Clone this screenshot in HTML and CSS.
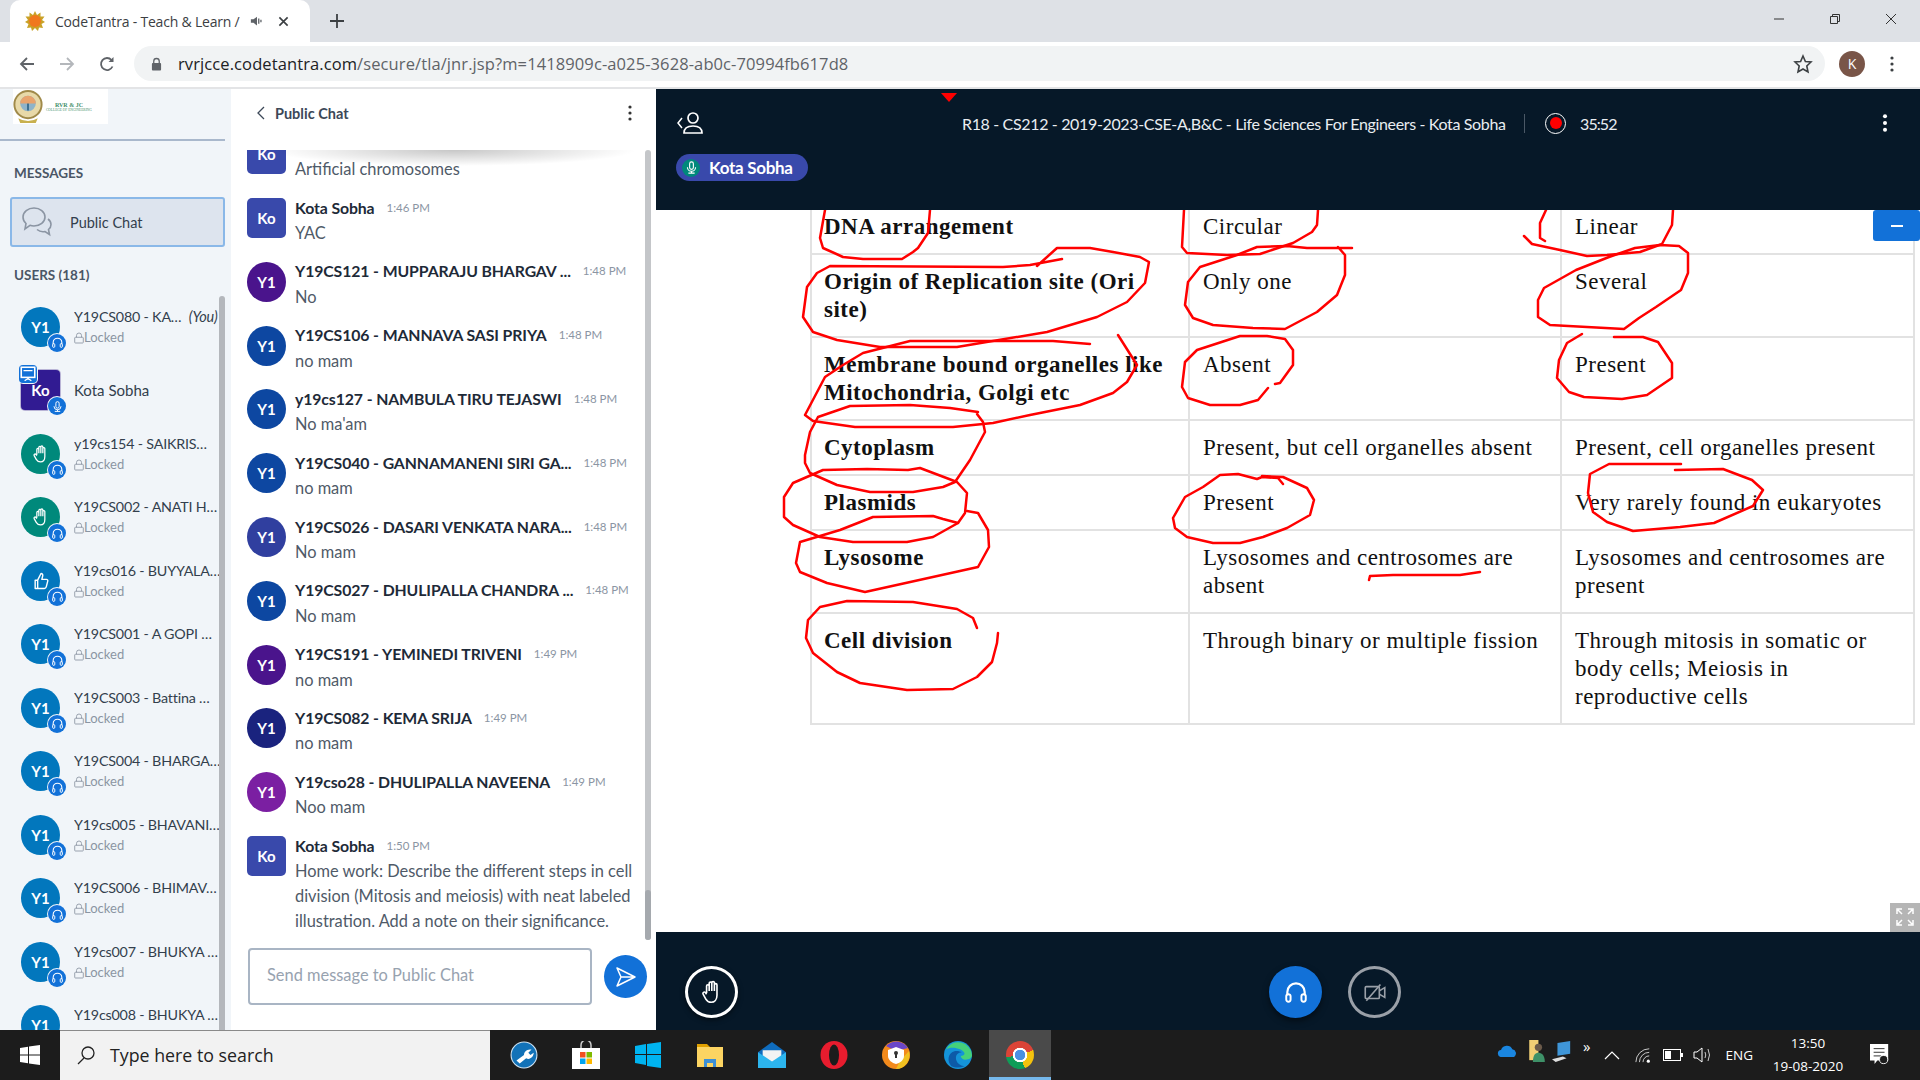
FILE: index.html
```html
<!DOCTYPE html>
<html lang="en">
<head>
  <meta charset="UTF-8">
  <title>CodeTantra - Teach &amp; Learn</title>
  <link rel="stylesheet" href="styles.css">
</head>
<body>
  <svg class="defs" width="0" height="0">
    <symbol id="i-phones" viewBox="0 0 24 24">
      <path d="M4 15v-3a8 8 0 0 1 16 0v3" fill="none" stroke="currentColor" stroke-width="2"/>
      <rect x="3" y="14" width="4" height="7" rx="2" fill="none" stroke="currentColor" stroke-width="1.8"/>
      <rect x="17" y="14" width="4" height="7" rx="2" fill="none" stroke="currentColor" stroke-width="1.8"/>
    </symbol>
    <symbol id="i-mic" viewBox="0 0 24 24">
      <rect x="9" y="3" width="6" height="12" rx="3" fill="none" stroke="currentColor" stroke-width="1.8"/>
      <path d="M5.500 11.500a6.500 6.500 0 0 0 13 0M12 18v3M7 21h10" fill="none" stroke="currentColor" stroke-width="1.800"/>
    </symbol>
    <symbol id="i-lock" viewBox="0 0 14 16">
      <rect x="1" y="7" width="12" height="8" rx="1" fill="none" stroke="currentColor" stroke-width="1.200"/>
      <path d="M3.500 7V4.500a3.500 3.500 0 0 1 7 0V7" fill="none" stroke="currentColor" stroke-width="1.200"/>
    </symbol>
    <symbol id="i-hand" viewBox="0 0 24 24">
      <path d="M7 13V6.500a1.200 1.200 0 0 1 2.400 0V11M9.400 11V4a1.200 1.200 0 0 1 2.400 0v7M11.800 11V3.500a1.200 1.200 0 0 1 2.400 0V11M14.200 11V5.500a1.200 1.200 0 0 1 2.400 0V15c0 4-2.300 6.500-5.300 6.500-2.500 0-3.900-1.100-5-3L3.800 14c-.8-1.400 1-2.700 2.100-1.500L7 14" fill="none" stroke="currentColor" stroke-width="1.500" stroke-linejoin="round"/>
    </symbol>
    <symbol id="i-thumb" viewBox="0 0 24 24">
      <path d="M5 11h3v10H5zM8 11l4-8c1.800 0 2.500 1.500 2 3l-1 4h5.500c1.200 0 1.900 1 1.600 2.100l-1.800 7c-.3 1.100-1 1.900-2.300 1.900H8" fill="none" stroke="currentColor" stroke-width="1.700" stroke-linejoin="round"/>
    </symbol>
  </svg>

  <!-- browser chrome -->
  <div class="tabbar">
    <div class="tab">
      <svg class="favicon" viewBox="0 0 20 20"><polygon points="10,0 12,4 15.500,1.500 15.500,5.500 19.500,5.500 17,9 20,11 16.500,13 18,17 14,16.500 13,20 10,17 7,20 6,16.500 2,17 3.500,13 0,11 3,9 .5,5.500 4.500,5.500 4.500,1.500 8,4" fill="#c9a227"/><circle cx="10" cy="10" r="6" fill="#f0781e"/></svg>
      <span class="tab-title">CodeTantra - Teach &amp; Learn /</span>
      <svg class="tab-sound" viewBox="0 0 16 16"><path d="M1 6h3l4-3v10l-4-3H1z" fill="#5f6368"/><path d="M10 5v6M12.500 6.500v3" stroke="#5f6368" stroke-width="1.500"/></svg>
      <svg class="tab-close" viewBox="0 0 12 12"><path d="M1.500 1.500l9 9M10.500 1.500l-9 9" stroke="#3c4043" stroke-width="1.800"/></svg>
    </div>
    <svg class="tab-new" viewBox="0 0 14 14"><path d="M7 0v14M0 7h14" stroke="#3c4043" stroke-width="1.800"/></svg>
    <div class="win-btns">
      <svg viewBox="0 0 12 12"><path d="M1 6h10" stroke="#333" stroke-width="1"/></svg>
      <svg viewBox="0 0 12 12"><path d="M1.500 3.500h7v7h-7zM3.500 3.500v-2h7v7h-2" fill="none" stroke="#333" stroke-width="1"/></svg>
      <svg viewBox="0 0 12 12"><path d="M1 1l10 10M11 1L1 11" stroke="#333" stroke-width="1"/></svg>
    </div>
  </div>
  <div class="toolbar">
    <svg class="nav-btn" viewBox="0 0 16 16"><path d="M15 8H2M8 2L2 8l6 6" fill="none" stroke="#5f6368" stroke-width="1.800"/></svg>
    <svg class="nav-btn" viewBox="0 0 16 16"><path d="M1 8h13M8 2l6 6-6 6" fill="none" stroke="#b4b7bb" stroke-width="1.800"/></svg>
    <svg class="nav-btn" viewBox="0 0 16 16"><path d="M13.500 10.500A6 6 0 1 1 12.500 4" fill="none" stroke="#5f6368" stroke-width="1.800"/><path d="M14.500 1v5h-5z" fill="#5f6368"/></svg>
    <div class="omnibox">
      <svg class="lock" viewBox="0 0 12 14"><rect x="1" y="6" width="10" height="8" rx="1" fill="#5f6368"/><path d="M3 6V4a3 3 0 0 1 6 0v2" fill="none" stroke="#5f6368" stroke-width="1.400"/></svg>
      <span class="url"><b>rvrjcce.codetantra.com</b>/secure/tla/jnr.jsp?m=1418909c-a025-3628-ab0c-70994fb617d8</span>
      <svg class="star" viewBox="0 0 20 20"><polygon points="10,2 12.400,7.500 18,8 13.800,12 15,18 10,15 5,18 6.200,12 2,8 7.600,7.500" fill="none" stroke="#3c4043" stroke-width="1.600"/></svg>
    </div>
    <span class="profile">K</span>
    <svg class="chrome-menu" viewBox="0 0 4 16"><circle cx="2" cy="2" r="1.600"/><circle cx="2" cy="8" r="1.600"/><circle cx="2" cy="14" r="1.600"/></svg>
  </div>

  <div class="app">
    <!-- left column -->
    <aside class="sidebar">
      <div class="brand">
        <div class="logo">
          <svg class="seal" viewBox="0 0 30 36"><circle cx="15" cy="16" r="14" fill="#e8d9a8" stroke="#a08a4a" stroke-width="2"/><circle cx="15" cy="15" r="8" fill="#8fb3c9"/><path d="M14 8h2v14h-2z" fill="#3b6e8f"/><path d="M7 15a8 8 0 0 1 16 0z" fill="#e9a36c"/><path d="M5 30q10 6 20 0l-2 5H7z" fill="#c8b04e"/></svg>
          <div class="logo-text"><b>RVR &amp; JC</b><span>COLLEGE OF ENGINEERING</span></div>
        </div>
      </div>
      <h4 class="side-title">MESSAGES</h4>
      <div class="chat-link">
        <svg class="chat-icon" viewBox="0 0 32 32"><path d="M13 2c6 0 11 4 11 9s-5 9-11 9c-1.500 0-3-.3-4-.7L4 23l1-5.500C3 15.800 2 13.500 2 11c0-5 5-9 11-9z" fill="none" stroke="#8b95a3" stroke-width="1.600"/><path d="M27 13c2 1.500 3 3.500 3 5.500 0 2-1 3.800-2.500 5l1 5-4.500-3c-3 .6-6-.3-8-2" fill="none" stroke="#8b95a3" stroke-width="1.600"/></svg>
        Public Chat
      </div>
      <h4 class="side-title users-title">USERS (181)</h4>
      <ul class="users">
        <li class="user"><div class="ava ava-blue">Y1<span class="badge"><svg><use href="#i-phones"/></svg></span></div><div class="user-info"><div class="user-name">Y19CS080 - KA… <i>(You)</i></div><div class="locked"><svg><use href="#i-lock"/></svg>Locked</div></div></li>
        <li class="user"><div class="ava ava-host"><span class="host-tag"><svg viewBox="0 0 16 16"><rect x="2" y="2" width="12" height="9" fill="none" stroke="#fff" stroke-width="1.400"/><path d="M4 5h8M8 11v2M5 14l3-2 3 2" stroke="#fff" stroke-width="1.200" fill="none"/></svg></span>Ko<span class="badge"><svg><use href="#i-mic"/></svg></span></div><div class="user-info"><div class="user-name host-name">Kota Sobha</div></div></li>
        <li class="user"><div class="ava ava-green"><svg class="ava-icon"><use href="#i-hand"/></svg><span class="badge"><svg><use href="#i-phones"/></svg></span></div><div class="user-info"><div class="user-name">y19cs154 - SAIKRIS…</div><div class="locked"><svg><use href="#i-lock"/></svg>Locked</div></div></li>
        <li class="user"><div class="ava ava-green"><svg class="ava-icon"><use href="#i-hand"/></svg><span class="badge"><svg><use href="#i-phones"/></svg></span></div><div class="user-info"><div class="user-name">Y19CS002 - ANATI H…</div><div class="locked"><svg><use href="#i-lock"/></svg>Locked</div></div></li>
        <li class="user"><div class="ava ava-blue"><svg class="ava-icon"><use href="#i-thumb"/></svg><span class="badge"><svg><use href="#i-phones"/></svg></span></div><div class="user-info"><div class="user-name">Y19cs016 - BUYYALA…</div><div class="locked"><svg><use href="#i-lock"/></svg>Locked</div></div></li>
        <li class="user"><div class="ava ava-blue">Y1<span class="badge"><svg><use href="#i-phones"/></svg></span></div><div class="user-info"><div class="user-name">Y19CS001 - A GOPI …</div><div class="locked"><svg><use href="#i-lock"/></svg>Locked</div></div></li>
        <li class="user"><div class="ava ava-blue">Y1<span class="badge"><svg><use href="#i-phones"/></svg></span></div><div class="user-info"><div class="user-name">Y19CS003 - Battina …</div><div class="locked"><svg><use href="#i-lock"/></svg>Locked</div></div></li>
        <li class="user"><div class="ava ava-blue">Y1<span class="badge"><svg><use href="#i-phones"/></svg></span></div><div class="user-info"><div class="user-name">Y19CS004 - BHARGA…</div><div class="locked"><svg><use href="#i-lock"/></svg>Locked</div></div></li>
        <li class="user"><div class="ava ava-blue">Y1<span class="badge"><svg><use href="#i-phones"/></svg></span></div><div class="user-info"><div class="user-name">Y19cs005 - BHAVANI…</div><div class="locked"><svg><use href="#i-lock"/></svg>Locked</div></div></li>
        <li class="user"><div class="ava ava-blue">Y1<span class="badge"><svg><use href="#i-phones"/></svg></span></div><div class="user-info"><div class="user-name">Y19CS006 - BHIMAV…</div><div class="locked"><svg><use href="#i-lock"/></svg>Locked</div></div></li>
        <li class="user"><div class="ava ava-blue">Y1<span class="badge"><svg><use href="#i-phones"/></svg></span></div><div class="user-info"><div class="user-name">Y19cs007 - BHUKYA …</div><div class="locked"><svg><use href="#i-lock"/></svg>Locked</div></div></li>
        <li class="user"><div class="ava ava-blue">Y1<span class="badge"><svg><use href="#i-phones"/></svg></span></div><div class="user-info"><div class="user-name">Y19cs008 - BHUKYA …</div><div class="locked"></div></div></li>
      </ul>
      <div class="side-scroll"></div>
    </aside>

    <!-- public chat -->
    <section class="chat">
      <header class="chat-head">
        <svg class="chat-back" viewBox="0 0 8 14"><path d="M7 1L1 7l6 6" fill="none" stroke="#3c4858" stroke-width="1.300"/></svg>
        <span class="chat-title">Public Chat</span>
        <svg class="chat-more" viewBox="0 0 4 16"><circle cx="2" cy="2" r="1.600"/><circle cx="2" cy="8" r="1.600"/><circle cx="2" cy="14" r="1.600"/></svg>
      </header>
      <div class="messages-wrap">
        <div class="messages">
          <div class="msg"><div class="msg-ava sq c-indigo">Ko</div><div class="msg-body"><div class="msg-head"></div><p>Artificial chromosomes</p></div></div>
          <div class="msg"><div class="msg-ava sq c-indigo">Ko</div><div class="msg-body"><div class="msg-head"><span class="msg-name">Kota Sobha</span><span class="msg-time">1:46 PM</span></div><p>YAC</p></div></div>
          <div class="msg"><div class="msg-ava c-purple">Y1</div><div class="msg-body"><div class="msg-head"><span class="msg-name">Y19CS121 - MUPPARAJU BHARGAV ...</span><span class="msg-time">1:48 PM</span></div><p>No</p></div></div>
          <div class="msg"><div class="msg-ava c-blue">Y1</div><div class="msg-body"><div class="msg-head"><span class="msg-name">Y19CS106 - MANNAVA SASI PRIYA</span><span class="msg-time">1:48 PM</span></div><p>no mam</p></div></div>
          <div class="msg"><div class="msg-ava c-blue">Y1</div><div class="msg-body"><div class="msg-head"><span class="msg-name">y19cs127 - NAMBULA TIRU TEJASWI</span><span class="msg-time">1:48 PM</span></div><p>No ma'am</p></div></div>
          <div class="msg"><div class="msg-ava c-blue">Y1</div><div class="msg-body"><div class="msg-head"><span class="msg-name">Y19CS040 - GANNAMANENI SIRI GA...</span><span class="msg-time">1:48 PM</span></div><p>no mam</p></div></div>
          <div class="msg"><div class="msg-ava c-slate">Y1</div><div class="msg-body"><div class="msg-head"><span class="msg-name">Y19CS026 - DASARI VENKATA NARA...</span><span class="msg-time">1:48 PM</span></div><p>No mam</p></div></div>
          <div class="msg"><div class="msg-ava c-blue">Y1</div><div class="msg-body"><div class="msg-head"><span class="msg-name">Y19CS027 - DHULIPALLA CHANDRA ...</span><span class="msg-time">1:48 PM</span></div><p>No mam</p></div></div>
          <div class="msg"><div class="msg-ava c-purple">Y1</div><div class="msg-body"><div class="msg-head"><span class="msg-name">Y19CS191 - YEMINEDI TRIVENI</span><span class="msg-time">1:49 PM</span></div><p>no mam</p></div></div>
          <div class="msg"><div class="msg-ava c-navy">Y1</div><div class="msg-body"><div class="msg-head"><span class="msg-name">Y19CS082 - KEMA SRIJA</span><span class="msg-time">1:49 PM</span></div><p>no mam</p></div></div>
          <div class="msg"><div class="msg-ava c-violet">Y1</div><div class="msg-body"><div class="msg-head"><span class="msg-name">Y19cso28 - DHULIPALLA NAVEENA</span><span class="msg-time">1:49 PM</span></div><p>Noo mam</p></div></div>
          <div class="msg"><div class="msg-ava sq c-indigo">Ko</div><div class="msg-body"><div class="msg-head"><span class="msg-name">Kota Sobha</span><span class="msg-time">1:50 PM</span></div><p>Home work: Describe the different steps in cell division (Mitosis and meiosis) with neat labeled illustration. Add a note on their significance.</p></div></div>
        </div>
        <div class="msg-shadow"></div>
        <div class="msg-scroll"><span></span></div>
      </div>
      <div class="composer">
        <div class="composer-input">Send message to Public Chat</div>
        <button class="send"><svg viewBox="0 0 24 24"><path d="M3 3l18 9-18 9 4-9zM7 12h14" fill="none" stroke="#fff" stroke-width="1.500" stroke-linejoin="round"/></svg></button>
      </div>
    </section>

    <!-- classroom -->
    <main class="stage">
      <header class="stage-head">
        <svg class="marker" viewBox="0 0 16 9"><polygon points="0,0 16,0 8,9" fill="#f00"/></svg>
        <div class="stage-row">
          <svg class="people" viewBox="0 0 28 24"><path d="M6 7l-4 5 4 5" fill="none" stroke="#fff" stroke-width="1.500"/><circle cx="17" cy="7" r="5" fill="none" stroke="#fff" stroke-width="1.700"/><path d="M8 22c0-5 4-7 9-7s9 2 9 7z" fill="none" stroke="#fff" stroke-width="1.700"/></svg>
          <span class="stage-title">R18 - CS212 - 2019-2023-CSE-A,B&amp;C - Life Sciences For Engineers - Kota Sobha</span>
          <span class="stage-sep"></span>
          <span class="rec"><i></i></span>
          <span class="rec-time">35:52</span>
          <svg class="stage-more" viewBox="0 0 4 16"><circle cx="2" cy="2" r="1.800"/><circle cx="2" cy="8" r="1.800"/><circle cx="2" cy="14" r="1.800"/></svg>
        </div>
        <div class="speaker"><span class="speaker-mic"><svg><use href="#i-mic"/></svg></span>Kota Sobha</div>
      </header>

      <div class="board">
        <table class="sheet">
          <colgroup><col class="col-a"><col class="col-b"><col class="col-c"></colgroup>
          <tr><th>DNA arrangement</th><td>Circular</td><td>Linear</td></tr>
          <tr class="tall"><th>Origin of Replication site (Ori site)</th><td>Only one</td><td>Several</td></tr>
          <tr class="tall"><th>Membrane bound organelles like Mitochondria, Golgi etc</th><td>Absent</td><td>Present</td></tr>
          <tr><th>Cytoplasm</th><td>Present, but cell organelles absent</td><td>Present, cell organelles present</td></tr>
          <tr><th>Plasmids</th><td>Present</td><td>Very rarely found in eukaryotes</td></tr>
          <tr class="tall"><th>Lysosome</th><td>Lysosomes and centrosomes are absent</td><td>Lysosomes and centrosomes are present</td></tr>
          <tr><th>Cell division</th><td>Through binary or multiple fission</td><td>Through mitosis in somatic or body cells; Meiosis in reproductive cells</td></tr>
        </table>

        <!-- pen strokes, in page coordinates -->
        <svg class="ink" viewBox="656 210 1264 722" width="1264" height="722">
          <polyline points="825,210 820,238 823,248 843,257 863,259 902,259 913,252 918,248 928,233 930,210"/>
          <polyline points="1062,259 1030,265 1003,267 830,266 817,273 807,287 803,317 813,332 837,340 880,347 957,347 1047,332 1097,317 1127,302 1145,283 1149,262 1140,257 1113,252 1090,248 1057,248 1037,266"/>
          <polyline points="1090,344 1053,341 910,341 863,353 843,365 825,377 805,415 813,421 855,427 953,427 993,423 1030,415 1080,405 1113,393 1127,382 1137,365 1118,335"/>
          <polyline points="978,412 950,408 910,405 850,406 818,417 810,432 805,455 805,463 810,473 837,485 870,492 913,492 943,487 955,482 970,460 985,432 983,422 977,414"/>
          <polyline points="908,470 867,469 823,470 793,483 784,497 784,517 793,525 820,537 853,542 907,542 933,537 958,523 965,513 967,493 957,482 920,468 908,470"/>
          <polyline points="958,523 943,519 933,516 873,517 840,530 800,542 796,563 800,572 827,583 865,592 978,567 989,547 988,530 978,513 967,511"/>
          <polyline points="977,628 973,618 957,609 913,602 847,601 820,607 808,620 806,638 813,653 837,672 860,683 907,690 953,689 977,677 992,662 997,643 998,633"/>
          <polyline points="1184,210 1182,247 1187,253 1227,255 1260,254 1293,243 1312,232 1317,225 1318,210"/>
          <polyline points="1352,248 1307,248 1287,246 1257,247 1237,255 1200,267 1188,282 1185,305 1193,318 1213,325 1253,328 1285,329 1317,312 1337,295 1345,275 1345,255 1338,247"/>
          <polyline points="1275,384 1280,383 1293,365 1293,350 1285,339 1267,336 1240,336 1197,350 1185,362 1182,387 1188,398 1210,405 1240,405 1258,400 1268,388"/>
          <polyline points="1546,210 1540,223 1540,238 1545,241"/>
          <polyline points="1524,236 1532,244 1560,250 1587,256 1607,255 1640,252 1662,244 1672,225 1673,210"/>
          <polyline points="1660,245 1679,246 1688,253 1688,273 1681,290 1656,307 1639,318 1624,329 1550,325 1538,317 1538,300 1544,288 1576,270 1609,257 1635,248 1660,245"/>
          <polyline points="1614,337 1643,337 1658,342 1672,363 1672,378 1647,395 1622,399 1584,397 1569,392 1557,378 1559,360 1567,343 1582,334"/>
          <polyline points="1681,464 1609,464 1590,474 1588,493 1593,512 1607,522 1633,531 1680,527 1714,523 1753,506 1763,490 1752,480 1723,469 1675,470"/>
          <polyline points="1283,484 1278,478 1262,477 1257,479 1238,474 1220,475 1203,487 1185,497 1173,518 1175,528 1187,537 1213,543 1240,543 1263,537 1287,528 1310,515 1314,500 1307,488 1283,477 1262,476"/>
          <polyline points="1369,580 1370,576 1393,575 1460,575 1480,572"/>
        </svg>

        <button class="zoom-out"></button>
        <button class="fullscreen"><svg viewBox="0 0 20 20"><path d="M2 7V2h5M3 3l4 4M13 2h5v5M17 3l-4 4M2 13v5h5M3 17l4-4M18 13v5h-5M17 17l-4-4" fill="none" stroke="#fff" stroke-width="1.500"/></svg></button>
      </div>

      <footer class="stage-foot">
        <button class="round ring-white"><svg><use href="#i-hand"/></svg></button>
        <div class="foot-center">
          <button class="round solid-blue"><svg><use href="#i-phones"/></svg></button>
          <button class="round ring-gray"><svg viewBox="0 0 24 24"><rect x="3" y="7" width="13" height="11" rx="1" fill="none" stroke="#9aa0a8" stroke-width="1.500"/><path d="M16 11l5-3v9l-5-3M4 20L17 5" fill="none" stroke="#9aa0a8" stroke-width="1.500"/></svg></button>
        </div>
      </footer>
    </main>
  </div>

  <!-- windows taskbar -->
  <div class="taskbar">
    <div class="start"><svg viewBox="0 0 20 20"><path d="M0 3l8-1.200V9.500H0zM9 1.600L20 0v9.500H9zM0 10.500h8v7.700L0 17zM9 10.500h11V20L9 18.400z" fill="#fff"/></svg></div>
    <div class="search">
      <svg viewBox="0 0 20 20"><circle cx="12" cy="8" r="6" fill="none" stroke="#222" stroke-width="1.300"/><path d="M8 13l-6 6" stroke="#222" stroke-width="1.300"/></svg>
      Type here to search
    </div>
    <div class="task-icons">
      <span class="task-icon"><svg viewBox="0 0 26 26"><circle cx="13" cy="13" r="12" fill="#1272b8" stroke="#cfe3f2"/><path d="M6 18l7-5c0-3 3-6 7-5l-3 3 2 2 3-2c0 4-4 7-7 5l-6 5z" fill="#fff"/></svg></span>
      <span class="task-icon"><svg viewBox="0 0 28 28"><path d="M9 7V4a5 5 0 0 1 10 0v3" fill="none" stroke="#ccc" stroke-width="1.500"/><rect x="0" y="7" width="28" height="21" fill="#fff"/><rect x="8" y="11" width="5.500" height="5.500" fill="#f25022"/><rect x="14.500" y="11" width="5.500" height="5.500" fill="#7fba00"/><rect x="8" y="17.500" width="5.500" height="5.500" fill="#00a4ef"/><rect x="14.500" y="17.500" width="5.500" height="5.500" fill="#ffb900"/></svg></span>
      <span class="task-icon"><svg viewBox="0 0 28 28"><path d="M1 5l11-2v10H1zM13 3l14-2v12H13zM1 14h11v10L1 22zM13 14h14v13l-14-2z" fill="#00b4f0"/></svg></span>
      <span class="task-icon"><svg viewBox="0 0 28 26"><path d="M1 2h10l3 3H1z" fill="#e0a000"/><rect x="1" y="5" width="26" height="20" fill="#fcd462"/><path d="M8 25v-8h12v8h-3v-4h-6v4z" fill="#3c8fd6"/></svg></span>
      <span class="task-icon"><svg viewBox="0 0 30 28"><path d="M0 11L15 0l15 11v17H0z" fill="#0f6cbd"/><path d="M5 9h20v7l-10 6-10-6z" fill="#f3f3f3"/><path d="M0 11l15 10 15-10v17H0z" fill="#2cb5ee"/></svg></span>
      <span class="task-icon"><svg viewBox="0 0 28 28"><ellipse cx="14" cy="14" rx="13.500" ry="14" fill="#e81c2e"/><ellipse cx="14" cy="14" rx="5" ry="10.500" fill="#1c1c1c"/></svg></span>
      <span class="task-icon"><svg viewBox="0 0 28 28"><circle cx="14" cy="14" r="14" fill="#f28a1c"/><path d="M4 5a14 14 0 0 1 22 2L14 10z" fill="#6a46c9"/><path d="M27 10a14 14 0 0 1-13 18l4-8z" fill="#f0c020"/><path d="M14 6l8 3v6c0 4-4 7-8 8-4-1-8-4-8-8V9z" fill="#fff"/><circle cx="14" cy="12" r="2" fill="#333"/><path d="M13 13h2v4h-2z" fill="#333"/></svg></span>
      <span class="task-icon"><svg viewBox="0 0 30 30"><circle cx="15" cy="15" r="15" fill="#1493d8"/><path d="M2 9A15 15 0 0 1 30 15c0 3-3 5-7 5-3 0-5-2-5-4 2 0 4-1 4-3-2-5-14-8-20-4z" fill="#45d17a"/><path d="M8 27c-5-5-4-14 3-16 3-1 6 0 8 1-4 0-7 3-6 8 1 4 4 6 9 7-5 2-10 2-14 0z" fill="#0d5aa7"/></svg></span>
      <span class="task-icon active"><span class="chrome-logo"></span></span>
    </div>
    <div class="tray">
      <svg class="tray-cloud" viewBox="0 0 24 16"><path d="M5 16a4 4 0 0 1-1-8 7 7 0 0 1 13-1 5 5 0 0 1 2 9z" fill="#1a86e0"/></svg>
      <svg class="tray-folder" viewBox="0 0 18 24"><rect x="0" y="0" width="10" height="22" fill="#f2cf74"/><circle cx="10" cy="8" r="4" fill="#6b5a4a"/><path d="M4 24c0-8 3-10 6-10s7 2 7 10z" fill="#3e9168"/></svg>
      <svg class="tray-pc" viewBox="0 0 22 24"><path d="M6 2l14-2v14l-14 2z" fill="#3f96d8"/><path d="M0 20l12-3 4 2-12 4z" fill="#ddd"/></svg>
      <span class="tray-more">»</span>
      <svg class="tray-up" viewBox="0 0 16 10"><path d="M1 9l7-7 7 7" fill="none" stroke="#fff" stroke-width="1.200"/></svg>
      <svg class="tray-wifi" viewBox="0 0 18 18"><path d="M1 17A15 15 0 0 1 16 2M5 17A11 11 0 0 1 16 6M9 17a7 7 0 0 1 7-7" fill="none" stroke="#ddd" stroke-width="1"/><circle cx="15" cy="16" r="1.800" fill="#fff"/></svg>
      <svg class="tray-batt" viewBox="0 0 20 12"><rect x=".5" y=".5" width="17" height="11" fill="none" stroke="#fff"/><rect x="2" y="2" width="6" height="8" fill="#fff"/><rect x="18" y="4" width="2" height="4" fill="#fff"/></svg>
      <svg class="tray-vol" viewBox="0 0 20 18"><path d="M1 6h3l5-4v14l-5-4H1z" fill="none" stroke="#fff"/><path d="M12 6q1.500 3 0 6M15 3q3 6 0 12" fill="none" stroke="#ccc"/></svg>
      <span class="tray-lang">ENG</span>
      <div class="clock"><span>13:50</span><span>19-08-2020</span></div>
      <svg class="tray-note" viewBox="0 0 22 24"><path d="M0 0h20v18H8l-3 4v-4H0z" fill="#fff"/><path d="M4 5h12M4 9h12M4 13h8" stroke="#222"/><circle cx="15" cy="17" r="4.500" fill="#1c1c1c" stroke="#fff"/></svg>
    </div>
  </div>
</body>
</html>
```

FILE: styles.css
```css
* {
  margin: 0;
  padding: 0;
  box-sizing: border-box;
}
html, body {
  height: 100%;
}
body {
  width: 1920px;
  height: 1080px;
  overflow: hidden;
  display: flex;
  flex-direction: column;
  font-family: Lato, "Noto Sans", sans-serif;
  background-color: #fff;
}
button {
  border: none;
  background: none;
}
ul {
  list-style: none;
}
.defs {
  position: absolute;
}

/* tab strip */
.tabbar {
  height: 42px;
  flex: none;
  display: flex;
  align-items: flex-end;
  padding-left: 10px;
  background-color: #dee1e6;
}
.tab {
  width: 300px;
  height: 42px;
  display: flex;
  align-items: center;
  padding-left: 15px;
  background-color: #fff;
  border-radius: 10px 10px 0 0;
}
.favicon {
  width: 20px;
  height: 20px;
  flex: none;
}
.tab-title {
  width: 190px;
  margin-left: 10px;
  overflow: hidden;
  white-space: nowrap;
  font: 14px "Open Sans", sans-serif;
  color: #3c4043;
  letter-spacing: -.2px;
}
.tab-sound {
  width: 14px;
  height: 14px;
  margin-left: 5px;
}
.tab-close {
  width: 11px;
  height: 11px;
  margin-left: 14px;
}
.tab-new {
  width: 14px;
  height: 14px;
  margin: 0 0 14px 20px;
}
.win-btns {
  margin-left: auto;
  align-self: flex-start;
  display: flex;
  gap: 44px;
  padding: 13px 23px 0 0;
}
.win-btns svg {
  width: 12px;
  height: 12px;
}

/* address bar */
.toolbar {
  height: 47px;
  flex: none;
  display: flex;
  align-items: center;
  padding: 0 0 2px 19px;
  background-color: #fff;
  border-bottom: 2px solid #e3e4e6;
}
.nav-btn {
  width: 16px;
  height: 16px;
  margin-right: 24px;
}
.omnibox {
  width: 1691px;
  height: 35px;
  margin-left: -5px;
  display: flex;
  align-items: center;
  padding: 0 11px 0 17px;
  background-color: #f1f3f4;
  border-radius: 18px;
}
.lock {
  width: 11px;
  height: 14px;
}
.url {
  margin-left: 16px;
  font: 16.500px "Open Sans", sans-serif;
  color: #5f6368;
  letter-spacing: .1px;
}
.url b {
  font-weight: 400;
  color: #202124;
}
.star {
  width: 20px;
  height: 20px;
  margin-left: auto;
  margin-right: 1px;
}
.profile {
  width: 26px;
  height: 26px;
  margin-left: 14px;
  border-radius: 50%;
  background-color: #795548;
  color: #fff;
  font: 14px/26px "Open Sans", sans-serif;
  text-align: center;
}
.chrome-menu {
  width: 4px;
  height: 16px;
  margin-left: 25px;
  fill: #3c4043;
}

.app {
  flex: 1;
  min-height: 0;
  display: flex;
}

/* left column */
.sidebar {
  width: 231px;
  flex: none;
  position: relative;
  overflow: hidden;
  background-color: #f1f5f9;
}
.brand {
  width: 225px;
  height: 52px;
  padding-left: 13px;
  border-bottom: 2px solid #a9b8cc;
}
.logo {
  width: 95px;
  height: 35px;
  display: flex;
  align-items: center;
  background-color: #fff;
}
.seal {
  width: 30px;
  height: 35px;
  flex: none;
}
.logo-text {
  display: flex;
  flex-direction: column;
  align-items: center;
  margin-left: 3px;
  font-family: "Liberation Serif", serif;
  color: #3f8f6b;
}
.logo-text b {
  font-size: 6px;
}
.logo-text span {
  font-size: 3.5px;
  white-space: nowrap;
}
.side-title {
  margin: 23px 0 0 14px;
  font-size: 13.5px;
  line-height: 18px;
  font-weight: 700;
  color: #4a5666;
}
.chat-link {
  width: 215px;
  height: 50px;
  margin: 15px 0 0 10px;
  display: flex;
  align-items: center;
  padding-left: 9px;
  font-size: 14.500px;
  color: #333f4d;
  background-color: #dde4ee;
  border: 2px solid #8ab8e8;
  border-radius: 3px;
}
.chat-icon {
  width: 32px;
  height: 32px;
  margin-right: 17px;
}
.users-title {
  margin-top: 19px;
  font-weight: 700;
}
.users {
  margin-top: 11px;
}
.user {
  height: 63.500px;
  display: flex;
  align-items: center;
  padding-left: 21px;
}
.ava {
  width: 39px;
  height: 40px;
  flex: none;
  position: relative;
  display: flex;
  align-items: center;
  justify-content: center;
  border-radius: 50%;
  color: #fff;
  font-size: 15px;
  font-weight: 700;
}
.ava-blue {
  background-color: #0277bd;
}
.ava-green {
  background-color: #00897b;
}
.ava-host {
  border-radius: 4px;
  background-color: #311b92;
  box-shadow: 0 0 0 1px #b9b4d6;
}
.ava-icon {
  width: 20px;
  height: 20px;
  color: #fff;
}
.badge {
  position: absolute;
  right: -6px;
  bottom: -5px;
  width: 18px;
  height: 18px;
  display: flex;
  align-items: center;
  justify-content: center;
  border-radius: 50%;
  background-color: #1271d8;
  color: #fff;
  box-shadow: 0 0 0 1px #f1f5f9;
}
.badge svg {
  width: 13px;
  height: 13px;
}
.host-tag {
  position: absolute;
  left: -2px;
  top: -5px;
  width: 18px;
  height: 18px;
  border-radius: 4px;
  background-color: #1271d8;
  box-shadow: 0 0 0 1px #f1f5f9;
}
.host-tag svg {
  width: 18px;
  height: 18px;
}
.user-info {
  width: 146px;
  margin-left: 14px;
}
.user-name {
  overflow: hidden;
  white-space: nowrap;
  font-size: 14.300px;
  line-height: 20px;
  color: #333f4d;
  letter-spacing: -.2px;
}
.user-name i {
  margin-left: 4px;
  font-size: 14.500px;
}
.host-name {
  font-size: 15px;
  letter-spacing: 0;
}
.locked {
  height: 20px;
  display: flex;
  align-items: center;
  font-size: 13px;
  color: #8b95a3;
}
.locked svg {
  width: 10px;
  height: 12px;
  margin-top: 2px;
}
.side-scroll {
  position: absolute;
  left: 219px;
  top: 207px;
  bottom: 0;
  width: 6px;
  background-color: #b4b7bc;
  border-radius: 3px 3px 0 0;
}

/* chat column */
.chat {
  width: 425px;
  flex: none;
  display: flex;
  flex-direction: column;
  background-color: #fff;
}
.chat-head {
  height: 61px;
  flex: none;
  display: flex;
  align-items: center;
  padding: 0 24px 13px 26px;
}
.chat-back {
  width: 8px;
  height: 14px;
}
.chat-title {
  margin-left: 10px;
  font-size: 14.500px;
  font-weight: 700;
  color: #3c4858;
}
.chat-more {
  width: 4px;
  height: 16px;
  margin-left: auto;
  fill: #333;
}
.messages-wrap {
  position: relative;
  height: 790px;
  flex: none;
  overflow: hidden;
}
.messages {
  position: absolute;
  left: 16px;
  right: 11px;
  bottom: 7px;
}
.msg {
  display: flex;
  margin-top: 12.800px;
}
.msg-ava {
  width: 39px;
  height: 40px;
  flex: none;
  margin-top: 4px;
  display: flex;
  align-items: center;
  justify-content: center;
  border-radius: 50%;
  color: #fff;
  font-size: 15px;
  font-weight: 700;
}
.msg-ava.sq {
  border-radius: 5px;
}
.c-indigo {
  background-color: #3949ab;
}
.c-purple {
  background-color: #4a148c;
}
.c-blue {
  background-color: #0d47a1;
}
.c-slate {
  background-color: #303f9f;
}
.c-navy {
  background-color: #1a237e;
}
.c-violet {
  background-color: #7b1fa2;
}
.msg-body {
  flex: 1;
  min-width: 0;
  margin-left: 9px;
}
.msg-head {
  height: 26px;
  display: flex;
  align-items: center;
  white-space: nowrap;
}
.msg-name {
  font-size: 15.800px;
  font-weight: 700;
  color: #1e2a38;
  letter-spacing: -.1px;
}
.msg-time {
  margin-left: 12px;
  font-size: 11.500px;
  color: #8b95a3;
}
.msg-body p {
  font-size: 16.400px;
  line-height: 25px;
  color: #4f5a68;
}
.msg-shadow {
  position: absolute;
  left: 40px;
  right: 20px;
  top: 0;
  height: 16px;
  background: radial-gradient(ellipse 50% 100% at 50% 0, rgba(0, 0, 0, .22), rgba(0, 0, 0, 0));
}
.msg-scroll {
  position: absolute;
  left: 414px;
  top: 0;
  bottom: 0;
  width: 6px;
  background-color: #c4c6c9;
  border-radius: 3px;
}
.msg-scroll span {
  position: absolute;
  left: 0;
  right: 0;
  bottom: 0;
  height: 50px;
  background-color: #a5a9ae;
  border-radius: 3px;
}
.composer {
  display: flex;
  align-items: center;
  padding: 8px 9px 0 17px;
}
.composer-input {
  width: 347px;
  height: 57px;
  padding-left: 17px;
  border: 2px solid #a9b5c4;
  border-radius: 4px;
  font-size: 16.400px;
  line-height: 49px;
  color: #97a2af;
}
.send {
  width: 43px;
  height: 43px;
  margin-left: 12px;
  display: flex;
  align-items: center;
  justify-content: center;
  border-radius: 50%;
  background-color: #1271d8;
}
.send svg {
  width: 24px;
  height: 24px;
}

/* classroom */
.stage {
  flex: 1;
  min-width: 0;
  display: flex;
  flex-direction: column;
  background-color: #061828;
}
.stage-head {
  position: relative;
  height: 121px;
  flex: none;
  padding-left: 20px;
}
.marker {
  position: absolute;
  left: 285px;
  top: 4px;
  width: 16px;
  height: 9px;
}
.stage-row {
  height: 68px;
  display: flex;
  align-items: center;
  color: #e9edf1;
}
.people {
  width: 28px;
  height: 24px;
  margin-right: 258px;
  flex: none;
}
.stage-title {
  width: 543px;
  flex: none;
  white-space: nowrap;
  font-size: 16px;
  letter-spacing: -.35px;
}
.stage-sep {
  width: 1px;
  height: 19px;
  margin: 0 20px 0 19px;
  background-color: #4a5866;
}
.rec {
  width: 21px;
  height: 21px;
  display: flex;
  align-items: center;
  justify-content: center;
  border: 1.500px solid #fff;
  border-radius: 50%;
}
.rec i {
  width: 12px;
  height: 12px;
  border-radius: 50%;
  background-color: #f00;
}
.rec-time {
  margin-left: 14px;
  font-size: 16px;
  letter-spacing: -.9px;
}
.stage-more {
  width: 6px;
  height: 18px;
  margin-left: auto;
  margin-right: 32px;
  fill: #fff;
}
.speaker {
  width: 132px;
  height: 27px;
  margin-top: -3px;
  display: flex;
  align-items: center;
  padding-left: 6px;
  border-radius: 14px;
  background-color: #3949ab;
  color: #fff;
  font-size: 17px;
  font-weight: 700;
  letter-spacing: -.3px;
}
.speaker-mic {
  width: 18px;
  height: 18px;
  margin-right: 9px;
  display: flex;
  align-items: center;
  justify-content: center;
  border-radius: 50%;
  background-color: #00897b;
}
.speaker-mic svg {
  width: 15px;
  height: 15px;
}
.board {
  position: relative;
  height: 722px;
  flex: none;
  overflow: hidden;
  padding-left: 154px;
  background-color: #fff;
}
.sheet {
  width: 1105px;
  margin-top: -12px;
  table-layout: fixed;
  border-collapse: collapse;
  font-family: "Liberation Serif", serif;
  font-size: 23px;
  line-height: 28px;
  color: #111;
  letter-spacing: .5px;
}
.col-a {
  width: 378px;
}
.col-b {
  width: 372px;
}
.sheet th, .sheet td {
  padding: 12.500px 13px;
  border: 2px solid #e2e2e2;
  text-align: left;
  vertical-align: top;
}
.sheet th {
  padding-left: 12px;
}
.sheet tr {
  height: 55px;
}
.sheet tr.tall {
  height: 83px;
}
.ink {
  position: absolute;
  left: 0;
  top: 0;
  fill: none;
  stroke: #f00;
  stroke-width: 2.500;
  stroke-linejoin: round;
  stroke-linecap: round;
}
.zoom-out {
  position: absolute;
  right: 0;
  top: 0;
  width: 47px;
  height: 31px;
  border-radius: 3px;
  background-color: #1271d8;
}
.zoom-out::after {
  content: "";
  position: absolute;
  left: 18px;
  top: 15px;
  width: 12px;
  height: 1.500px;
  background-color: #fff;
}
.fullscreen {
  position: absolute;
  right: 0;
  bottom: 0;
  width: 30px;
  height: 29px;
  padding: 4px 5px;
  background-color: #b5b5b5;
}
.stage-foot {
  height: 98px;
  flex: none;
  display: flex;
  align-items: center;
  padding: 22px 0 0 29px;
}
.foot-center {
  display: flex;
  gap: 26px;
  margin-left: 531px;
}
.round {
  width: 53px;
  height: 52px;
  display: flex;
  align-items: center;
  justify-content: center;
  border-radius: 50%;
}
.round svg {
  width: 26px;
  height: 26px;
}
.ring-white {
  border: 3px solid #fff;
  color: #fff;
  box-shadow: 0 2px 5px rgba(0, 0, 0, .5);
}
.solid-blue {
  background-color: #1271d8;
  color: #fff;
  box-shadow: 0 3px 6px rgba(0, 0, 0, .5);
}
.ring-gray {
  border: 3px solid #9aa0a8;
}

/* taskbar */
.taskbar {
  height: 50px;
  flex: none;
  display: flex;
  align-items: center;
  background-color: #1c1c1c;
}
.start {
  width: 60px;
  display: flex;
  justify-content: center;
}
.start svg {
  width: 20px;
  height: 20px;
}
.search {
  width: 430px;
  height: 50px;
  display: flex;
  align-items: center;
  padding: 0 0 2px 16px;
  border-top: 1px solid #8a8a8a;
  background-color: #f2f2f2;
  font: 17.800px "Open Sans", sans-serif;
  color: #222;
}
.search svg {
  width: 20px;
  height: 22px;
  margin-right: 14px;
}
.task-icons {
  display: flex;
  margin-left: 3px;
}
.task-icon {
  width: 62px;
  height: 50px;
  display: flex;
  align-items: center;
  justify-content: center;
}
.task-icon svg {
  width: 28px;
  height: 28px;
}
.task-icon.active {
  background-color: #4a4a4a;
  border-bottom: 3px solid #76b9ed;
  padding-top: 3px;
}
.chrome-logo {
  width: 28px;
  height: 28px;
  border-radius: 50%;
  background: radial-gradient(circle, #4a90e2 0 5px, #fff 5.500px 7px, transparent 7.500px), conic-gradient(from -100deg, #db4437 0 170deg, #f4c20d 170deg 260deg, #0f9d58 260deg);
}
.tray {
  margin-left: auto;
  display: flex;
  align-items: center;
  color: #fff;
}
.tray svg {
  flex: none;
}
.tray-cloud {
  width: 22px;
  height: 14px;
  margin: -10px 10px 0 0;
}
.tray-folder {
  width: 17px;
  height: 22px;
  margin: -8px 6px 0 0;
}
.tray-pc {
  width: 20px;
  height: 22px;
  margin: -6px 11px 0 0;
}
.tray-more {
  margin: -18px 13px 0 0;
  font: 15px "Open Sans", sans-serif;
}
.tray-up {
  width: 16px;
  height: 10px;
  margin-right: 15px;
}
.tray-wifi {
  width: 16px;
  height: 16px;
  margin-right: 12px;
}
.tray-batt {
  width: 20px;
  height: 12px;
  margin-right: 10px;
}
.tray-vol {
  width: 20px;
  height: 18px;
  margin-right: 13px;
}
.tray-lang {
  font: 13.500px "Open Sans", sans-serif;
  margin-right: 16px;
}
.clock {
  width: 78px;
  display: flex;
  flex-direction: column;
  align-items: center;
  font: 13.500px/23px "Open Sans", sans-serif;
  white-space: nowrap;
  margin-right: 23px;
}
.tray-note {
  width: 20px;
  height: 22px;
  margin-right: 30px;
}
```
